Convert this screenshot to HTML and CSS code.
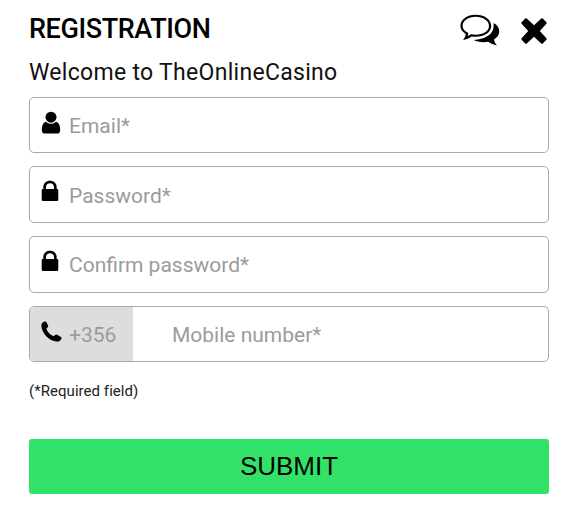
FILE: index.html
```
<!DOCTYPE html>
<html lang="en">

<head>
    <meta charset="UTF-8">
    <meta name="viewport" content="width=device-width, initial-scale=1.0">
    <title>Registration</title>
    <link rel="stylesheet" href="styles.css">
</head>

<body>
    <div class="registration">
        <header class="header">
            <h1 class="title">REGISTRATION</h1>
            <button class="icon-button chat" type="button" aria-label="Chat">
                <svg width="40" height="32" viewBox="0 0 40 32">
                    <path fill-rule="evenodd" d="M15.7 0.8C24.4 0.8 31.2 5.6 31.2 12C31.2 18.3 24.4 22.8 15.7 22.8C14.2 22.8 12.9 22.7 11.6 22.4C9.3 24.3 6.5 25.5 3 26C4.4 24.3 5.3 22.3 5.8 20C2.4 18 0.4 15.2 0.4 12C0.4 5.6 7 0.8 15.7 0.8ZM15.7 2.8C8.2 2.8 2.6 6.9 2.6 12C2.6 14.9 4.8 17.2 8.4 19.1L7.8 22L10.9 20.3C12.5 20.6 14 20.8 15.7 20.8C23.2 20.8 29 16.9 29 12C29 6.9 23.2 2.8 15.7 2.8Z" />
                    <path d="M33.5 9C37.1 10.8 39.3 13.8 39.3 17.3C39.3 20.9 37.3 23.5 34 25.4C34.4 27.6 35.5 29.7 37 31.4C33.6 30.9 30.7 29.8 28.2 27.8C22.5 28.9 17.2 27.8 13.8 26C24.5 25.3 32.2 20.8 33.3 14.5C33.7 12.6 33.8 10.7 33.5 9Z" />
                </svg>
            </button>
            <button class="icon-button close" type="button" aria-label="Close">
                <svg width="26" height="26" viewBox="0 0 26 26">
                    <path d="M5.8 0.6L13 7.2L20.2 0.6Q21 0 21.8 0.6L25.4 4.2Q26 5 25.4 5.8L18.8 13L25.4 20.2Q26 21 25.4 21.8L21.8 25.4Q21 26 20.2 25.4L13 18.8L5.8 25.4Q5 26 4.2 25.4L0.6 21.8Q0 21 0.6 20.2L7.2 13L0.6 5.8Q0 5 0.6 4.2L4.2 0.6Q5 0 5.8 0.6Z" />
                </svg>
            </button>
        </header>
        <p class="welcome">Welcome to TheOnlineCasino</p>
        <form class="form">
            <div class="field">
                <svg class="icon icon-user" width="20" height="24" viewBox="0 0 20 24">
                    <circle cx="10" cy="6.2" r="5.5" />
                    <path d="M5.2 10.7C6.5 12 8.1 12.8 10 12.8C11.9 12.8 13.5 12 14.8 10.7C18 11.3 19.2 14.6 19.2 19C19.2 21.5 18 22.6 16 22.6H4C2 22.6 0.8 21.5 0.8 19C0.8 14.6 2 11.3 5.2 10.7Z" />
                </svg>
                <input class="input" type="text" placeholder="Email*">
            </div>
            <div class="field">
                <svg class="icon icon-lock" width="18" height="22" viewBox="0 0 18 22">
                    <path fill-rule="evenodd" d="M2.3 9V7.2C2.3 3.4 5.2 0.8 9 0.8C12.8 0.8 15.7 3.4 15.7 7.2V9H16Q17.3 9 17.3 10.3V19.8Q17.3 21.1 16 21.1H2Q0.7 21.1 0.7 19.8V10.3Q0.7 9 2 9ZM5 9H13V7C13 4.8 11.3 3.2 9 3.2C6.7 3.2 5 4.8 5 7Z" />
                </svg>
                <input class="input" type="password" placeholder="Password*">
            </div>
            <div class="field">
                <svg class="icon icon-lock" width="18" height="22" viewBox="0 0 18 22">
                    <path fill-rule="evenodd" d="M2.3 9V7.2C2.3 3.4 5.2 0.8 9 0.8C12.8 0.8 15.7 3.4 15.7 7.2V9H16Q17.3 9 17.3 10.3V19.8Q17.3 21.1 16 21.1H2Q0.7 21.1 0.7 19.8V10.3Q0.7 9 2 9ZM5 9H13V7C13 4.8 11.3 3.2 9 3.2C6.7 3.2 5 4.8 5 7Z" />
                </svg>
                <input class="input" type="password" placeholder="Confirm password*">
            </div>
            <div class="field field-phone">
                <div class="prefix">
                    <svg class="icon icon-phone" width="21" height="21" viewBox="0 0 21 21">
                        <path d="M3.8 0.5C4.8 0.3 5.2 0.8 5.7 1.8L7 4.3C7.5 5.3 7.2 6 6.4 6.7L5.4 7.6C6 10.6 9.5 14.4 13 15.2L14 14C14.7 13.3 15.4 13.2 16.2 13.7L19.5 15.7C20.6 16.3 20.7 17 20.3 17.9C19.3 20 17.3 20.7 15 20.4C7.6 19.5 0.6 11.5 0.4 4.9C0.3 2.5 1.6 0.9 3.8 0.5Z" />
                    </svg>
                    <input class="input" type="text" placeholder="+356">
                </div>
                <input class="input input-mobile" type="tel" placeholder="Mobile number*">
            </div>
            <p class="required">(*Required field)</p>
            <button class="submit" type="submit">SUBMIT</button>
        </form>
    </div>
</body>

</html>
```
FILE: styles.css
```
* {
    box-sizing: border-box;
}

body {
    margin: 0;
    background: #fff;
    color: #000;
    font-family: Roboto, "Liberation Sans", sans-serif;
}

.registration {
    width: 520px;
    margin-left: 29px;
    padding-top: 12px;
}

.header {
    display: flex;
    align-items: center;
    height: 34px;
}

.title {
    margin: 0 auto 0 0;
    font-size: 27px;
    font-weight: 500;
    line-height: 34px;
    letter-spacing: -0.4px;
}

.icon-button {
    display: flex;
    padding: 0;
    border: 0;
    background: none;
}

.chat {
    margin: 2px 21px 0 0;
}

.close {
    margin: 3px 2px 0 0;
}

.welcome {
    margin: 12px 0 8.7px;
    color: #111;
    font-size: 23px;
    line-height: 30px;
    letter-spacing: 0.3px;
}

.field {
    display: flex;
    align-items: flex-start;
    height: 56.5px;
    margin-bottom: 13.17px;
    border: 1px solid #a9a9a9;
    border-radius: 5px;
    overflow: hidden;
}

.icon {
    flex: none;
    margin-left: 11px;
}

.icon-user {
    margin-top: 13px;
    margin-right: -2px;
}

.icon-lock {
    margin-top: 13px;
}

.icon-phone {
    margin-top: 14px;
    margin-right: -3px;
}

.input {
    flex: 1;
    min-width: 0;
    height: 100%;
    padding: 2px 0 0 10px;
    border: 0;
    outline: 0;
    background: none;
    font-family: inherit;
    font-size: 21px;
}

.input::placeholder {
    color: #9b9b9b;
}

.prefix {
    display: flex;
    align-items: flex-start;
    width: 103px;
    height: 100%;
    background: #ddd;
}

.input-mobile {
    padding-left: 39px;
}

.required {
    margin: 19px 0 38px;
    color: #222;
    font-size: 15px;
    line-height: 20px;
    letter-spacing: 0.05px;
}

.submit {
    display: block;
    width: 100%;
    height: 55px;
    padding: 0;
    border: 0;
    border-radius: 3px;
    background: #32e268;
    color: #000;
    font-family: "Liberation Sans", Arial, sans-serif;
    font-size: 26px;
}
```
